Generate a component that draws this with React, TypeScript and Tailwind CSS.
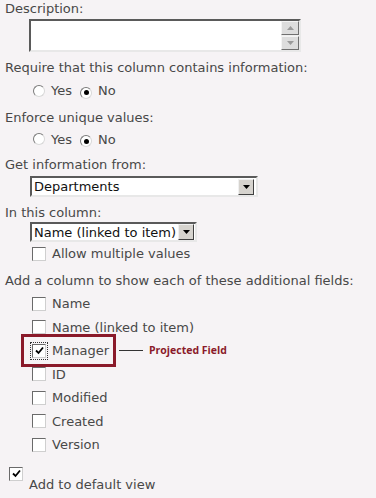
import React from 'react';

function Radio({ checked }: { checked?: boolean }) {
  return (
    <span className="relative inline-flex h-[12px] w-[12px] items-center justify-center rounded-full border border-t-[#7a7a7a] border-l-[#7a7a7a] border-r-[#d8d8d8] border-b-[#d8d8d8] bg-white">
      {checked && <span className="h-[5px] w-[5px] rounded-full bg-black" />}
    </span>
  );
}

function Check({ checked, dotted }: { checked?: boolean; dotted?: boolean }) {
  return (
    <span className={`inline-flex items-center justify-center ${dotted ? 'outline outline-1 outline-dotted outline-[#333] outline-offset-[1px]' : ''}`}>
      <span className="flex h-[14px] w-[14px] items-center justify-center border border-t-[#6a6a6a] border-l-[#6a6a6a] border-r-[#cfcfcf] border-b-[#cfcfcf] bg-white">
        {checked && (
          <svg width="9" height="9" viewBox="0 0 9 9">
            <path d="M1 4.5 L3.5 7 L8 1.5" fill="none" stroke="#000" strokeWidth="1.8" />
          </svg>
        )}
      </span>
    </span>
  );
}

function DropBtn() {
  return (
    <span className="flex h-[16px] w-[16px] items-center justify-center border border-t-[#f0f0f0] border-l-[#f0f0f0] border-r-[#404040] border-b-[#404040] bg-[#d6d3ce]">
      <svg width="7" height="4" viewBox="0 0 7 4">
        <path d="M0 0 H7 L3.5 4 Z" fill="#000" />
      </svg>
    </span>
  );
}

const fields = ['Name', 'Name (linked to item)', 'Manager', 'ID', 'Modified', 'Created', 'Version'];

export default function App() {
  return (
    <div
      className="h-[498px] w-[376px] overflow-hidden bg-[#f6f3f5] pl-[5px] text-[13px] leading-[15px] text-[#484848]"
      style={{ fontFamily: '"DejaVu Sans", Verdana, sans-serif' }}
    >
      <div className="pt-[1px]">Description:</div>
      {/* textarea */}
      <div className="ml-[24px] mt-[3px] flex h-[33px] w-[272px] border-2 border-t-[#5a5a5a] border-l-[#5a5a5a] border-r-[#e8e8e8] border-b-[#e8e8e8] bg-white">
        <div className="flex-1" />
        <div className="flex w-[18px] flex-col justify-between bg-[#efefef]">
          <span className="flex h-[14px] items-center justify-center border border-t-[#f4f4f4] border-l-[#f4f4f4] border-r-[#707070] border-b-[#707070] bg-[#dddddd]">
            <svg width="7" height="4" viewBox="0 0 7 4"><path d="M0 4 H7 L3.5 0 Z" fill="#9a9a9a" /></svg>
          </span>
          <span className="flex h-[14px] items-center justify-center border border-t-[#f4f4f4] border-l-[#f4f4f4] border-r-[#707070] border-b-[#707070] bg-[#dddddd]">
            <svg width="7" height="4" viewBox="0 0 7 4"><path d="M0 0 H7 L3.5 4 Z" fill="#9a9a9a" /></svg>
          </span>
        </div>
      </div>

      <div className="mt-[8px]">Require that this column contains information:</div>
      <div className="ml-[28px] mt-[8px] flex items-center">
        <Radio />
        <span className="ml-[6px]">Yes</span>
        <span className="ml-[8px]"><Radio checked /></span>
        <span className="ml-[6px]">No</span>
      </div>

      <div className="mt-[11px]">Enforce unique values:</div>
      <div className="ml-[28px] mt-[7px] flex items-center">
        <Radio />
        <span className="ml-[6px]">Yes</span>
        <span className="ml-[8px]"><Radio checked /></span>
        <span className="ml-[6px]">No</span>
      </div>

      <div className="mt-[10px]">Get information from:</div>
      <div className="ml-[25px] mt-[4px] flex h-[21px] w-[228px] items-center border-2 border-t-[#5a5a5a] border-l-[#5a5a5a] border-r-[#e8e8e8] border-b-[#e8e8e8] bg-white pl-[2px] pr-[2px] text-[#111]">
        <span className="flex-1">Departments</span>
        <DropBtn />
      </div>

      <div className="mt-[8px]">In this column:</div>
      <div className="ml-[25px] mt-[2px] flex h-[20px] w-[167px] items-center border-2 border-t-[#5a5a5a] border-l-[#5a5a5a] border-r-[#e8e8e8] border-b-[#e8e8e8] bg-white pl-[2px] pr-[1px] text-[#111]">
        <span className="flex-1 whitespace-nowrap">Name (linked to item)</span>
        <DropBtn />
      </div>
      <div className="ml-[27px] mt-[4px] flex items-center">
        <Check />
        <span className="ml-[6px]">Allow multiple values</span>
      </div>

      <div className="mt-[12px]">Add a column to show each of these additional fields:</div>
      <div className="mt-[8px] flex flex-col gap-[8.5px]">
        {fields.map((f) =>
          f === 'Manager' ? (
            <div key={f} className="flex items-center">
              <div className="-my-[9px] ml-[16px] flex items-center border-[3px] border-[#8a1a2a] py-[6px] pl-[8px] pr-[4px]">
                <Check checked dotted />
                <span className="ml-[6px]">Manager</span>
              </div>
              <span className="ml-[3px] h-px w-[24px] bg-[#333]" />
              <span
                className="ml-[6px] text-[10.5px] font-bold text-[#8a1a2a]"
                style={{ fontFamily: '"Open Sans", "DejaVu Sans", sans-serif' }}
              >
                Projected Field
              </span>
            </div>
          ) : (
            <div key={f} className="ml-[27px] flex items-center">
              <Check />
              <span className="ml-[6px]">{f}</span>
            </div>
          )
        )}
      </div>

      <div className="mt-[14px] flex items-start">
        <span className="ml-[4px]"><Check checked /></span>
        <span className="ml-[6px] mt-[11px]">Add to default view</span>
      </div>
    </div>
  );
}
